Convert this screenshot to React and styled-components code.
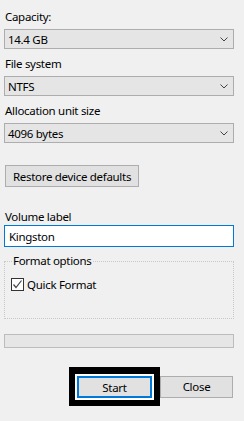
import React from 'react'
import styled, { createGlobalStyle } from 'styled-components'

const GlobalStyle = createGlobalStyle`
    html, body {
        margin: 0;
        padding: 0;
        background: #f0f0f0;
    }
    body {
        font-family: "Noto Sans", "Liberation Sans", sans-serif;
        font-size: 11.5px;
        letter-spacing: -0.3px;
        color: #000;
    }
`

const Dialog = styled.div`
    width: 230px;
    padding: 9px 10px 0 4px;
    display: flex;
    flex-direction: column;
`

const Label = styled.div`
    height: 16px;
    line-height: 16px;
    padding-left: 1px;
    margin-top: ${p => p.$top || 0}px;
`

const Combo = styled.div`
    margin-top: 4px;
    height: 20px;
    box-sizing: border-box;
    border: 1px solid #adadad;
    background: #e5e5e5;
    display: flex;
    align-items: center;
    justify-content: space-between;
    padding: 0 5px 0 3px;
`

const Chevron = () => (
    <svg width="8" height="5" viewBox="0 0 8 5">
        <polyline points="0.5,0.5 4,4 7.5,0.5" fill="none" stroke="#444" strokeWidth="1" />
    </svg>
)

const Button = styled.button`
    font: inherit;
    letter-spacing: inherit;
    color: #000;
    height: 22px;
    width: ${p => p.$w}px;
    box-sizing: border-box;
    background: #e1e1e1;
    border: ${p => (p.$focus ? '2px solid #0078d7' : '1px solid #adadad')};
    padding: 0;
    margin: 0;
    display: flex;
    align-items: center;
    justify-content: center;
`

const RestoreButton = styled(Button)`
    margin: 22px 0 0 1px;
`

const TextInput = styled.div`
    height: 22px;
    box-sizing: border-box;
    border: 1px solid #0078d7;
    background: #fff;
    display: flex;
    align-items: center;
    padding-left: 4px;
`

const Group = styled.fieldset`
    margin: 6px 0 0 0;
    padding: 7px 6px 0 6px;
    height: 66px;
    box-sizing: border-box;
    border: 1px dotted #c9c9c9;
    min-width: 0;
`

const Legend = styled.legend`
    padding: 0 1px;
    margin-left: 1px;
    line-height: 16px;
`

const CheckRow = styled.label`
    display: flex;
    align-items: center;
    gap: 3px;
    height: 16px;
`

const Box = styled.span`
    width: 13px;
    height: 13px;
    box-sizing: border-box;
    border: 1px solid #333;
    background: #fff;
    display: flex;
    align-items: center;
    justify-content: center;
`

const Progress = styled.div`
    margin-top: 15px;
    height: 14px;
    box-sizing: border-box;
    border: 1px solid #bcbcbc;
    background: #e6e6e6;
`

const Footer = styled.div`
    margin-top: 19px;
    display: flex;
    justify-content: flex-end;
    align-items: center;
    padding-right: 1px;
`

const Highlight = styled.div`
    background: #000;
    padding: 7px 6px 6px 6px;
`

const FocusRing = styled.div`
    background: #fff;
    padding: 2px;
`

const combos = [
    { label: 'Capacity:', value: '14.4 GB' },
    { label: 'File system', value: 'NTFS' },
    { label: 'Allocation unit size', value: '4096 bytes' }
]

export default function App() {
    return (
        <Dialog>
            <GlobalStyle />
            {combos.map((c, i) => (
                <div key={i}>
                    <Label $top={i ? 7 : 0}>{c.label}</Label>
                    <Combo>
                        <span>{c.value}</span>
                        <Chevron />
                    </Combo>
                </div>
            ))}
            <RestoreButton $w={134}>Restore device defaults</RestoreButton>
            <Label $top={22}>Volume label</Label>
            <TextInput>Kingston</TextInput>
            <Group>
                <Legend>Format options</Legend>
                <CheckRow>
                    <Box>
                        <svg width="11" height="11" viewBox="0 0 11 11">
                            <polyline points="1.5,5.5 4,8.5 9.5,1.5" fill="none" stroke="#444" strokeWidth="1.2" />
                        </svg>
                    </Box>
                    Quick Format
                </CheckRow>
            </Group>
            <Progress />
            <Footer>
                <Highlight>
                    <FocusRing>
                        <Button $w={75} $focus>Start</Button>
                    </FocusRing>
                </Highlight>
                <Button $w={73}>Close</Button>
            </Footer>
        </Dialog>
    )
}
